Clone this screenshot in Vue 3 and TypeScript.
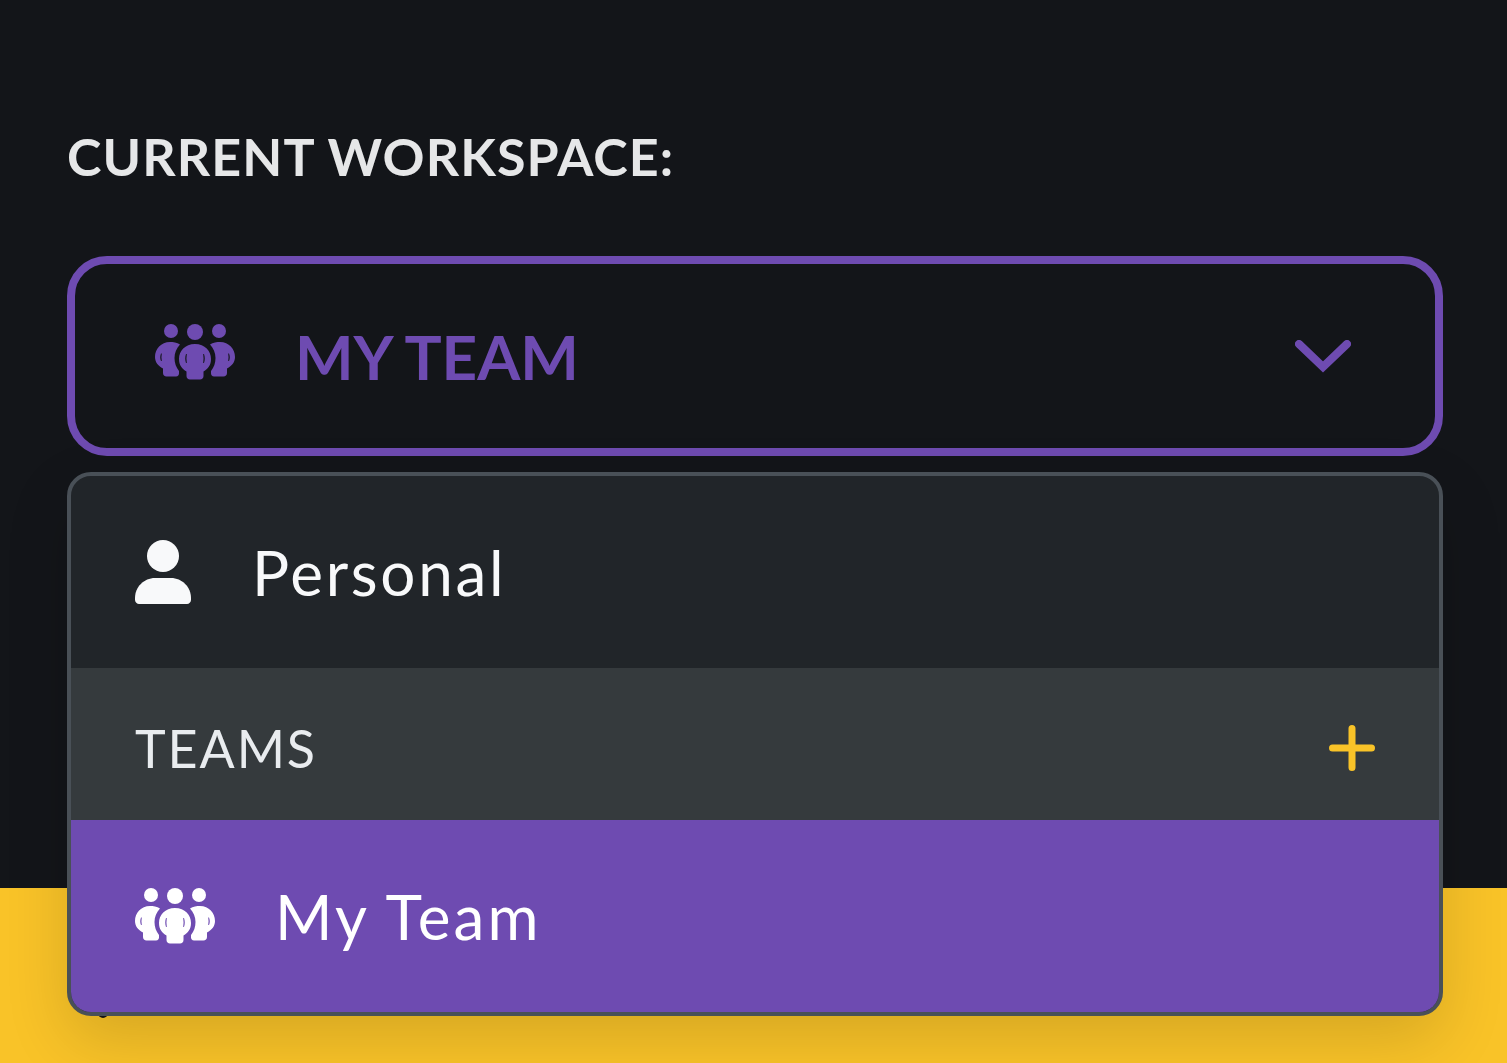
<script setup lang="ts">
interface Team {
  id: number
  name: string
}

const teams: Team[] = [{ id: 1, name: 'My Team' }]

// head circles and bodies of the three-person icon, slits cut out with evenodd
const heads = [
  { cx: 16, cy: 7, r: 7 },
  { cx: 40, cy: 8, r: 8 },
  { cx: 64, cy: 7, r: 7 }
]
const sideBody =
  'M25 20.500C22 18.500 18 18 15 18 6 18 0 25 0 33c0 5 3 9 8 11.500V49c0 2 1.500 3.500 3.500 3.500H21c2 0 3-1.500 3-3V47c-3-4-4.500-8-4.500-13 0-5 2-10 5.500-13.500zM6 29.500c-1 2.500-1 5 0 7.500h.8c-.5-2.500-.5-5 0-7.500z'
const centerBody =
  'M40 20c10 0 16 7 16 15 0 6-3 10-7.500 12.500V52c0 2-1.500 3.500-3.500 3.500H35c-2 0-3.500-1.500-3.500-3.500v-4.500C27 45 24 41 24 35c0-8 6-15 16-15zM31 30c-1 3-1 6 0 9h.8c-.5-3-.5-6 0-9zM49 30c1 3 1 6 0 9h-.8c.5-3 .5-6 0-9z'
</script>

<template>
  <div class="page">
    <section class="workspace">
      <h2 class="label">CURRENT WORKSPACE:</h2>
      <div class="picker">
        <button class="select" type="button">
          <svg class="team-icon" viewBox="0 0 80 56" fill="currentColor" fill-rule="evenodd">
            <circle v-for="h in heads" :key="h.cx" :cx="h.cx" :cy="h.cy" :r="h.r" />
            <path :d="sideBody" />
            <path :d="sideBody" transform="matrix(-1 0 0 1 80 0)" />
            <path :d="centerBody" />
          </svg>
          <span class="select-name">MY TEAM</span>
          <svg class="chevron" viewBox="0 0 56 33" fill="none" stroke="currentColor" stroke-width="8" stroke-linecap="round" stroke-linejoin="miter">
            <path d="M4 4 28 27 52 4" />
          </svg>
        </button>

        <div class="menu">
          <div class="row row-personal">
            <svg class="person-icon" viewBox="0 0 56 64" fill="currentColor">
              <circle cx="28" cy="16" r="16" />
              <path d="M20 38h16c11 0 20 9 20 20v2c0 2-2 4-4 4H4c-2 0-4-2-4-4v-2c0-11 9-20 20-20z" />
            </svg>
            <span>Personal</span>
          </div>
          <div class="row-heading">
            <span>TEAMS</span>
            <svg class="plus" viewBox="0 0 46 46" fill="none" stroke="currentColor" stroke-width="7" stroke-linecap="round">
              <path d="M23 3.500v39M3.500 23h39" />
            </svg>
          </div>
          <div v-for="team in teams" :key="team.id" class="row row-team">
            <svg class="team-icon" viewBox="0 0 80 56" fill="currentColor" fill-rule="evenodd">
              <circle v-for="h in heads" :key="h.cx" :cx="h.cx" :cy="h.cy" :r="h.r" />
              <path :d="sideBody" />
              <path :d="sideBody" transform="matrix(-1 0 0 1 80 0)" />
              <path :d="centerBody" />
            </svg>
            <span>{{ team.name }}</span>
          </div>
        </div>
      </div>
    </section>
    <footer class="footer"><i class="footer-dot"></i></footer>
  </div>
</template>

<style>
html,
body {
  background: #131519;
}
</style>

<style scoped>
.page {
  height: 1063px;
  overflow: hidden;
  display: flex;
  flex-direction: column;
  background: #131519;
  font-family: Lato, 'Open Sans', sans-serif;
}
.workspace {
  height: 888px;
  box-sizing: border-box;
  padding: 125px 64px 0 67px;
  position: relative;
  z-index: 1;
}
.label {
  margin: 0 0 69px;
  height: 62px;
  line-height: 62px;
  font-size: 52px;
  font-weight: 700;
  letter-spacing: 1.1px;
  color: #e6e7e8;
}
.picker {
  position: relative;
}
.select {
  width: 100%;
  height: 200px;
  box-sizing: border-box;
  display: flex;
  align-items: center;
  padding: 0 84px 0 80px;
  background: transparent;
  border: 8px solid #6e4bb1;
  border-radius: 40px;
  color: #6e4bb1;
  font: inherit;
}
.select .team-icon {
  margin-top: -8px;
}
.team-icon {
  width: 80px;
  height: 56px;
  flex: none;
}
.select-name {
  margin-left: 60px;
  font-size: 62px;
  font-weight: 700;
  flex: 1;
  text-align: left;
}
.chevron {
  width: 56px;
  height: 33px;
}
.menu {
  position: absolute;
  top: 216px;
  left: 0;
  right: 0;
  box-sizing: border-box;
  border: 4px solid #495057;
  border-radius: 24px;
  overflow: hidden;
  background: #212529;
  box-shadow: 0 24px 64px rgba(0, 0, 0, 0.14);
}
.row {
  height: 192px;
  display: flex;
  align-items: center;
  padding-left: 64px;
  font-size: 62px;
  letter-spacing: 2.7px;
}
.row-personal {
  color: #f8f9fa;
  gap: 61px;
}
.person-icon {
  width: 56px;
  height: 64px;
  flex: none;
}
.row-heading {
  height: 152px;
  box-sizing: border-box;
  display: flex;
  align-items: center;
  justify-content: space-between;
  padding: 7px 64px 0;
  background: #353a3d;
  color: #e9ecef;
  font-size: 52px;
  letter-spacing: 1.9px;
}
.plus {
  width: 46px;
  height: 46px;
  color: #f9c328;
}
.row-team {
  background: #6e4bb1;
  color: #fff;
  gap: 60px;
  letter-spacing: 3.1px;
}
.footer {
  flex: 1;
  position: relative;
  background: #f9c328;
}
.footer-dot {
  position: absolute;
  left: 98px;
  top: 120px;
  width: 10px;
  height: 10px;
  border-radius: 50%;
  background: #131519;
}
</style>
